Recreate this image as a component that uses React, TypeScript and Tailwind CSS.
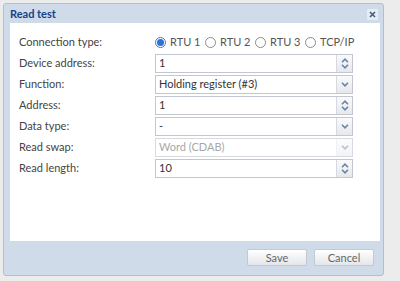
import React from 'react';

// ---------- Small pieces ----------

const FONT = "font-['Lato','Liberation_Sans',Arial,sans-serif]";

function Chevron({ dir }: { dir: 'up' | 'down' }) {
  return (
    <svg width="8" height="5" viewBox="0 0 8 5" aria-hidden="true">
      <path
        d={dir === 'up' ? 'M1 4.2 L4 1.2 L7 4.2' : 'M1 0.8 L4 3.8 L7 0.8'}
        fill="none"
        stroke="#6784aa"
        strokeWidth="1.6"
      />
    </svg>
  );
}

function Radio({ label, checked = false }: { label: string; checked?: boolean }) {
  return (
    <label className="flex w-[50px] items-center gap-[4px]">
      <span
        className={
          checked
            ? 'flex h-[11px] w-[11px] shrink-0 items-center justify-center rounded-full border border-[#3a7bd5] bg-white'
            : 'h-[11px] w-[11px] shrink-0 rounded-full border border-[#8c8c8c] bg-white'
        }
      >
        {checked && <span className="h-[7px] w-[7px] rounded-full bg-[#2c73d2]" />}
      </span>
      <span className="whitespace-nowrap text-[#555]">{label}</span>
    </label>
  );
}

function Field({
  value,
  kind,
  disabled = false,
}: {
  value: string;
  kind: 'spin' | 'select';
  disabled?: boolean;
}) {
  return (
    <div
      className={
        'flex h-[19px] w-[198px] border bg-white ' +
        (disabled ? 'border-[#d6d9e2]' : 'border-[#c2c6d0]')
      }
    >
      <div
        className={
          'flex flex-1 items-center pl-[3px] ' + (disabled ? 'text-[#a8a8a8]' : 'text-[#333]')
        }
      >
        {value}
      </div>
      <div
        className={
          'flex w-[16px] flex-col items-center justify-center gap-[1px] border-l bg-gradient-to-b from-[#fafafa] to-[#e6e8ec] ' +
          (disabled ? 'border-[#e3e5ea] opacity-50' : 'border-[#d6d9e0]')
        }
      >
        {kind === 'spin' ? (
          <>
            <Chevron dir="up" />
            <Chevron dir="down" />
          </>
        ) : (
          <Chevron dir="down" />
        )}
      </div>
    </div>
  );
}

function Row({ label, children }: { label: string; children: React.ReactNode }) {
  return (
    <div className="flex h-[21px] items-center">
      <div className="w-[136px] text-[#444]">{label}</div>
      {children}
    </div>
  );
}

function Button({ children }: { children: React.ReactNode }) {
  return (
    <button className="h-[17px] w-[60px] rounded-[2px] border border-[#c4c9d0] bg-gradient-to-b from-white to-[#e4e6ea] text-[#666]">
      {children}
    </button>
  );
}

// ---------- Page ----------

export default function App() {
  return (
    <div className={`${FONT} h-[281px] w-[400px] bg-[#ececec] pl-[3px] pt-[3px] text-[11px]`}>
      <div className="flex h-[273px] w-[381px] flex-col rounded-[3px] border border-[#b0c0d3] bg-[#cfdbe8] pb-[2px] pl-[6px] pr-[3px]">
        {/* Title bar */}
        <div className="flex h-[19px] items-center justify-between pt-[2px]">
          <span className="font-bold text-[#15428b]">Read test</span>
          <span className="mr-[2px] flex h-[11px] w-[11px] items-center justify-center rounded-[1px] bg-[#e6ecf4]">
            <svg width="7" height="7" viewBox="0 0 7 7" aria-hidden="true">
              <path d="M1 1 L6 6 M6 1 L1 6" stroke="#4a5f7e" strokeWidth="1.7" />
            </svg>
          </span>
        </div>

        {/* Form */}
        <div className="flex h-[218px] flex-col bg-white pl-[9px] pt-[9px]">
          <Row label="Connection type:">
            <div className="flex items-center">
              <Radio label="RTU 1" checked />
              <Radio label="RTU 2" />
              <Radio label="RTU 3" />
              <Radio label="TCP/IP" />
            </div>
          </Row>
          <Row label="Device address:">
            <Field value="1" kind="spin" />
          </Row>
          <Row label="Function:">
            <Field value="Holding register (#3)" kind="select" />
          </Row>
          <Row label="Address:">
            <Field value="1" kind="spin" />
          </Row>
          <Row label="Data type:">
            <Field value="-" kind="select" />
          </Row>
          <Row label="Read swap:">
            <Field value="Word (CDAB)" kind="select" disabled />
          </Row>
          <Row label="Read length:">
            <Field value="10" kind="spin" />
          </Row>
        </div>

        {/* Footer */}
        <div className="flex flex-1 items-center justify-end gap-[7px] pr-[6px]">
          <Button>Save</Button>
          <Button>Cancel</Button>
        </div>
      </div>
    </div>
  );
}
